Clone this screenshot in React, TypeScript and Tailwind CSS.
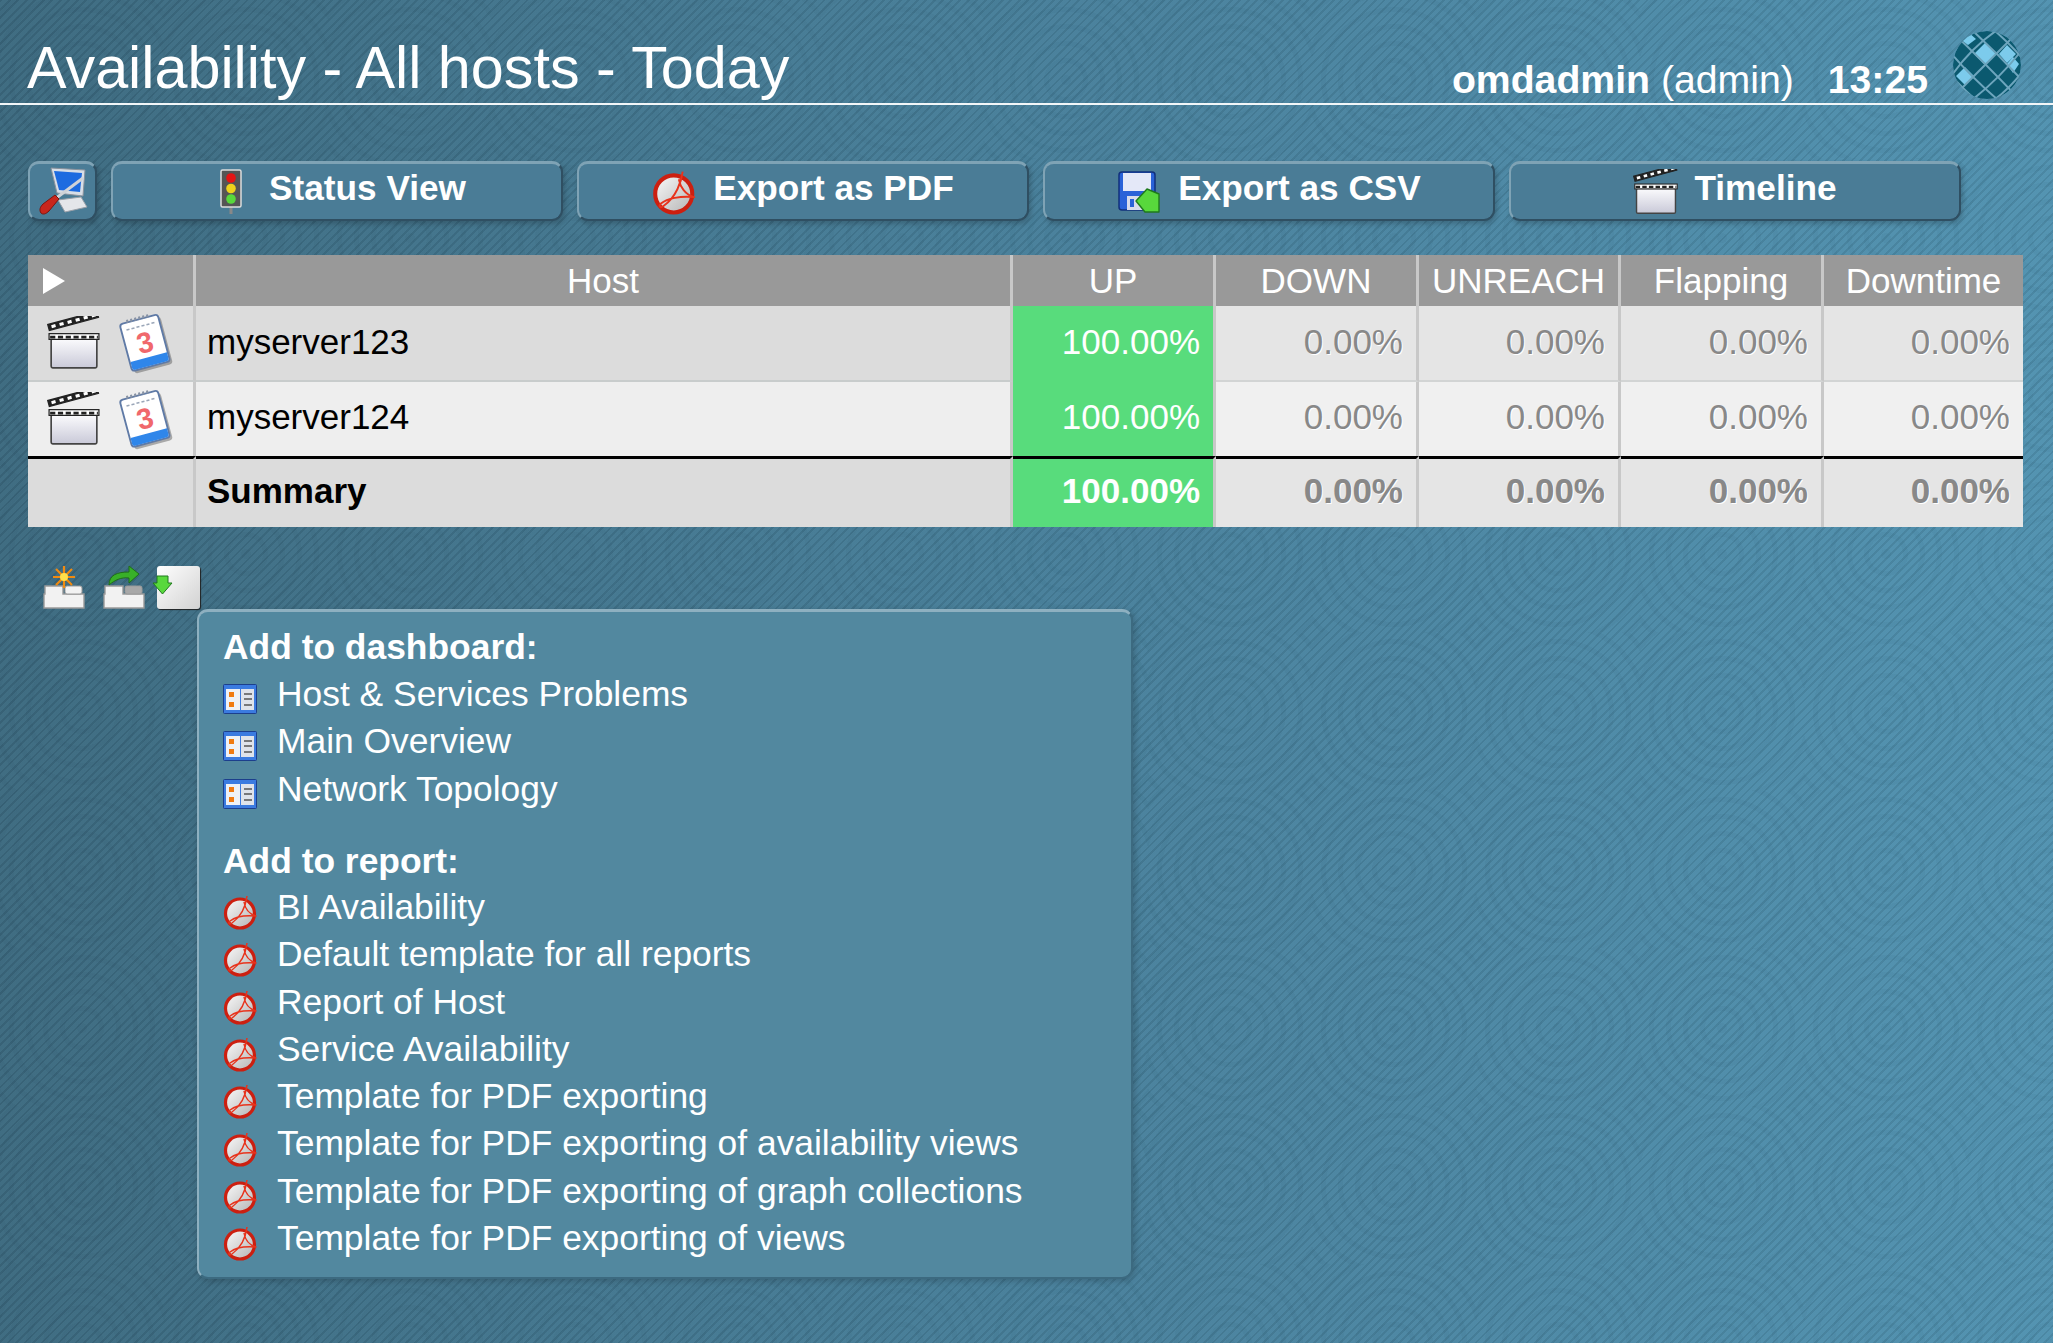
import type { ReactNode } from "react"

const dashboards = ["Host & Services Problems", "Main Overview", "Network Topology"]

const reports = [
  "BI Availability",
  "Default template for all reports",
  "Report of Host",
  "Service Availability",
  "Template for PDF exporting",
  "Template for PDF exporting of availability views",
  "Template for PDF exporting of graph collections",
  "Template for PDF exporting of views",
]

const hosts = ["myserver123", "myserver124"]
const columns = ["DOWN", "UNREACH", "Flapping", "Downtime"]
const widths = ["w-[168px]", "w-[817px]", "w-[203px]", "w-[203px]", "w-[202px]", "w-[203px]", "w-[199px]"]

function PdfIcon({ size = 36 }: { size?: number }) {
  return (
    <svg width={size} height={size} viewBox="0 0 36 36">
      <defs>
        <linearGradient id="pdfFace" x1="0" y1="0" x2="1" y2="1">
          <stop offset="0" stopColor="#fafafa" />
          <stop offset="1" stopColor="#b4b4b4" />
        </linearGradient>
      </defs>
      <circle cx="17" cy="19.5" r="14.5" fill="url(#pdfFace)" stroke="#cc1f10" strokeWidth="3.2" />
      <path
        d="M24 2c-1 8-5 20-15 27-3 2-4 0-2-2 5-4 15-6 26-5-7-2-11-8-12-14"
        fill="none"
        stroke="#e8331c"
        strokeWidth="1.5"
        strokeLinejoin="round"
      />
    </svg>
  )
}

function ClapperIcon({ size = 54 }: { size?: number }) {
  return (
    <svg width={size} height={size} viewBox="0 0 52 52">
      <defs>
        <linearGradient id="clapBody" x1="0" y1="0" x2="0" y2="1">
          <stop offset="0" stopColor="#fbfbfd" />
          <stop offset="1" stopColor="#c9c9d8" />
        </linearGradient>
      </defs>
      <rect x="4" y="22" width="44" height="28" rx="1.5" fill="url(#clapBody)" stroke="#444" strokeWidth="1.6" />
      <rect x="2" y="17" width="48" height="5.500" fill="#fff" stroke="#222" strokeWidth="1.200" />
      <path d="M3 20.300h46" stroke="#222" strokeWidth="2.500" strokeDasharray="5 2.500" />
      <g transform="rotate(-15 2 13)">
        <rect x="2" y="8" width="49" height="6" fill="#222" stroke="#222" strokeWidth="1.200" />
        <path d="M5 11h44" stroke="#fff" strokeWidth="3" strokeDasharray="4 4" />
      </g>
    </svg>
  )
}

function CalendarIcon() {
  return (
    <svg width="56" height="62" viewBox="0 0 54 60">
      <g transform="rotate(-15 27 30)">
        <rect x="9" y="9" width="38" height="47" rx="3" fill="#555" opacity="0.45" />
        <rect x="7" y="6" width="38" height="47" rx="3" fill="#fff" stroke="#5f7aa6" strokeWidth="1.8" />
        <path d="M7.800 44h36.400v6a2.300 2.300 0 0 1-2.300 2.300H10a2.300 2.300 0 0 1-2.300-2.300z" fill="#2f86ea" />
        <path d="M12 13h28" stroke="#9aa6b8" strokeWidth="1.500" strokeDasharray="3 2" />
        <path d="M14 5h24" stroke="#8792a4" strokeWidth="3" strokeDasharray="2 2" />
        <text x="26" y="39" textAnchor="middle" fontFamily="'Liberation Sans', sans-serif" fontWeight="700" fontSize="28" fill="#f0686c">
          3
        </text>
      </g>
    </svg>
  )
}

function DashletIcon() {
  return (
    <svg width="34" height="30" viewBox="0 0 34 30">
      <rect x="0.500" y="0.500" width="33" height="29" rx="1" fill="#3b7be0" stroke="#1c3f8c" />
      <rect x="3" y="5" width="14" height="21" fill="#eef1f6" />
      <rect x="18" y="5" width="13" height="21" fill="#dfe3ea" />
      <rect x="6" y="8" width="5" height="5" fill="#f07a10" />
      <rect x="6" y="18" width="5" height="5" fill="#f07a10" />
      <path d="M21 10h8M21 15h8M21 21h8" stroke="#555" strokeWidth="1.600" />
    </svg>
  )
}

function TrafficLightIcon() {
  return (
    <svg width="24" height="46" viewBox="0 0 24 46">
      <rect x="10.500" y="36" width="3" height="9" fill="#888" />
      <rect x="2" y="1" width="20" height="37" rx="1.500" fill="#555" stroke="#ddd" strokeWidth="1.500" />
      <circle cx="12" cy="9" r="4.800" fill="#e51414" />
      <circle cx="12" cy="19.500" r="4.800" fill="#eed21c" />
      <circle cx="12" cy="30" r="4.800" fill="#58d83c" />
    </svg>
  )
}

function FloppyIcon() {
  return (
    <svg width="44" height="44" viewBox="0 0 44 44">
      <rect x="1" y="2" width="36" height="38" rx="3" fill="#2a62d8" stroke="#12307c" strokeWidth="1.500" />
      <rect x="5" y="3" width="28" height="18" fill="#e4e8f8" />
      <rect x="9" y="26" width="20" height="14" fill="#d8dcec" />
      <rect x="12" y="29" width="4" height="8" fill="#2a62d8" />
      <path d="M29 19L18 31l9 11h14V24z" fill="#58d83c" stroke="#1f7a1c" strokeWidth="1.400" strokeLinejoin="round" />
    </svg>
  )
}

function ToolsIcon() {
  return (
    <svg width="52" height="52" viewBox="0 0 52 52">
      <path d="M14 2l34 2-2 26-26-3z" fill="#d8dee6" stroke="#8a929c" />
      <path d="M17 5l28 2-2 19-21-2z" fill="#1d6be0" />
      <path d="M21 34l23-3 6 10-22 5z" fill="#e4e6ea" stroke="#9aa0a8" />
      <path d="M46 12L18 33" stroke="#cfd3d8" strokeWidth="3" />
      <path d="M4 47c-2-3-1-6 2-9l12-9 4 4-10 12c-3 3-6 4-8 2z" fill="#c8261c" stroke="#7c140e" />
    </svg>
  )
}

function AddSnapinIcon({ tab, children }: { tab: string; children: ReactNode }) {
  return (
    <svg width="44" height="44" viewBox="0 0 44 44">
      <path d="M2 43V29h1v-8h18v8h21v14z" fill="#f2f2f2" stroke="#9a9a9a" strokeWidth="1.400" />
      <rect x="23" y="21" width="17" height="8" rx="2" fill={tab} stroke="#9a9a9a" />
      {children}
    </svg>
  )
}

function Ball() {
  return (
    <svg width="70" height="70" viewBox="0 0 70 70">
      <clipPath id="ballClip">
        <circle cx="35" cy="35" r="34" />
      </clipPath>
      <g clipPath="url(#ballClip)">
        <circle cx="35" cy="35" r="34" fill="#0b596f" />
        <path d="M33 13l11 11-11 11-11-11zM55 15l9 9-9 9-8-9zM13 37l9 9-9 9-9-9zM16 2l8 7-8 6-8-6zM61 27l6 7-6 9-6-9z" fill="#7ccbec" />
        <g fill="none" stroke="#6da5bd" strokeWidth="2">
          <path d="M-2 26Q8 8 26 -2M-2 48Q18 18 48 -2M0 68Q32 36 68 0M20 70Q48 48 70 20M42 70Q58 58 70 42" />
          <path d="M-2 44Q8 56 24 70M-2 22Q18 46 46 70M0 2Q30 30 68 70M20 0Q46 24 70 50M42 0Q60 16 70 28" />
        </g>
      </g>
    </svg>
  )
}

function ToolbarButton({ label, icon }: { label: string; icon: ReactNode }) {
  return (
    <button className="flex h-[60px] w-[452px] items-center justify-center gap-[15px] rounded-[11px] border-2 border-t-[3px] border-t-[#7fa3b5] border-l-[#7fa3b5] border-r-[#2f4f62] border-b-[#2f4f62] bg-[#4a7c96] text-[35.200px] font-bold text-white shadow-[2px_3px_5px_rgba(0,0,0,0.2)]">
      <span className="flex h-[46px] w-[46px] items-center justify-center">{icon}</span>
      <span className="pb-[6px]">{label}</span>
    </button>
  )
}

function PercentCell({ first, last }: { first?: boolean; last?: boolean }) {
  return (
    <td
      className={`pr-[13px] text-right text-[#888888] [text-shadow:1px_1px_0_#ffffff] ${first ? "border-b-2 border-b-[#d2d4d4] pb-[2px]" : "pb-[5px]"} ${
        last ? "" : "border-r-[3px] border-r-[#c8c8c8]"
      }`}
    >
      0.00%
    </td>
  )
}

function MenuRow({ icon, label }: { icon: ReactNode; label: string }) {
  return (
    <li className="flex h-[47.300px] items-center">
      <span className="flex w-[54px] shrink-0 items-center pt-[9px]">{icon}</span>
      <span>{label}</span>
    </li>
  )
}

export default function App() {
  return (
    <div className="min-h-[1343px] w-full overflow-hidden bg-[#4a83a0] bg-[linear-gradient(90deg,#3c6a80_0%,#477f9a_50%,#5192b0_100%)] font-['Liberation_Sans',sans-serif] text-white">
      <div className="min-h-[1343px] [background-image:repeating-linear-gradient(135deg,rgba(0,0,0,0.075)_0_2px,rgba(255,255,255,0.02)_2px_6px),repeating-radial-gradient(circle_at_82px_80px,rgba(0,30,50,0.035)_0_5px,transparent_5px_17px)] [background-size:auto,164px_158px]">
        <header className="flex h-[105px] items-end justify-between border-b-2 border-[#f2f6f8] pl-[27px] pr-[31px]">
          <h1 className="pb-[2px] text-[59.300px] leading-[66px]">Availability - All hosts - Today</h1>
          <div className="flex items-end">
            <div className="pb-[1px] text-[39.200px] leading-[44px]">
              <b>omdadmin</b> (admin)
              <b className="ml-[34px]">13:25</b>
            </div>
            <div className="mb-[3px] ml-[24px]">
              <Ball />
            </div>
          </div>
        </header>

        <div className="mt-[56px] flex gap-[14px] pl-[28px]">
          <button className="flex h-[60px] w-[69px] items-center justify-center rounded-[11px] border-2 border-t-[3px] border-t-[#7fa3b5] border-l-[#7fa3b5] border-r-[#2f4f62] border-b-[#2f4f62] bg-[#4a7c96] shadow-[2px_3px_5px_rgba(0,0,0,0.2)]">
            <ToolsIcon />
          </button>
          <ToolbarButton label="Status View" icon={<TrafficLightIcon />} />
          <ToolbarButton label="Export as PDF" icon={<PdfIcon size={46} />} />
          <ToolbarButton label="Export as CSV" icon={<FloppyIcon />} />
          <ToolbarButton label="Timeline" icon={<ClapperIcon size={46} />} />
        </div>

        <table className="ml-[28px] mt-[34px] w-[1995px] table-fixed border-separate border-spacing-0 text-[35px] leading-[40px]">
          <colgroup>
            {widths.map((w, i) => (
              <col key={i} className={w} />
            ))}
          </colgroup>
          <thead>
            <tr className="h-[51px] bg-[#999999] font-normal text-white">
              <th className="border-r-[3px] border-r-[#c8c8c8] pl-[14px] text-left">
                <svg width="24" height="28" viewBox="0 0 24 28">
                  <path d="M1 1l22 13L1 27z" fill="#fff" />
                </svg>
              </th>
              <th className="border-r-[3px] border-r-[#c8c8c8] font-normal">Host</th>
              <th className="border-r-[3px] border-r-[#c8c8c8] font-normal">UP</th>
              {columns.map((c, i) => (
                <th key={c} className={`font-normal ${i < 3 ? "border-r-[3px] border-r-[#c8c8c8]" : ""}`}>
                  {c}
                </th>
              ))}
            </tr>
          </thead>
          <tbody className="text-black">
            {hosts.map((host, i) => (
              <tr key={host} className={i === 0 ? "h-[76px] bg-[#e5e5e5]" : "h-[74px] bg-[#f0f0f0]"}>
                <td className={`border-r-[3px] border-r-[#c8c8c8] ${i === 0 ? "border-b-2 border-b-[#c8cccc] bg-[#dcdcdc]" : "bg-[#eeeeee]"}`}>
                  <div className="flex items-center gap-[17px] pl-[19px]">
                    <ClapperIcon />
                    <CalendarIcon />
                  </div>
                </td>
                <td className={`border-r-[3px] border-r-[#c8c8c8] pl-[11px] ${i === 0 ? "border-b-2 border-b-[#c8cccc] bg-[#dcdcdc] pb-[2px]" : "bg-[#eeeeee] pb-[5px]"}`}>{host}</td>
                <td className={`border-r-[3px] border-r-[#c8c8c8] bg-[#58dc7c] pr-[13px] text-right text-white ${i === 0 ? "pb-[4px]" : "pb-[5px]"}`}>100.00%</td>
                <PercentCell first={i === 0} />
                <PercentCell first={i === 0} />
                <PercentCell first={i === 0} />
                <PercentCell first={i === 0} last />
              </tr>
            ))}
            <tr className="h-[71px] bg-[#e5e5e5] font-bold">
              <td className="border-r-[3px] border-t-[3px] border-r-[#c8c8c8] border-t-black bg-[#dcdcdc]" />
              <td className="border-r-[3px] border-t-[3px] border-r-[#c8c8c8] border-t-black bg-[#dcdcdc] pb-[4px] pl-[11px]">Summary</td>
              <td className="border-r-[3px] border-t-[3px] border-r-[#c8c8c8] border-t-black bg-[#58dc7c] pb-[4px] pr-[13px] text-right text-white">100.00%</td>
              <td className="border-r-[3px] border-t-[3px] border-r-[#c8c8c8] border-t-black pb-[4px] pr-[13px] text-right text-[#888888] [text-shadow:1px_1px_0_#ffffff]">0.00%</td>
              <td className="border-r-[3px] border-t-[3px] border-r-[#c8c8c8] border-t-black pb-[4px] pr-[13px] text-right text-[#888888] [text-shadow:1px_1px_0_#ffffff]">0.00%</td>
              <td className="border-r-[3px] border-t-[3px] border-r-[#c8c8c8] border-t-black pb-[4px] pr-[13px] text-right text-[#888888] [text-shadow:1px_1px_0_#ffffff]">0.00%</td>
              <td className="border-t-[3px] border-t-black pb-[4px] pr-[13px] text-right text-[#888888] [text-shadow:1px_1px_0_#ffffff]">0.00%</td>
            </tr>
          </tbody>
        </table>

        <div className="ml-[42px] mt-[37px] flex h-[45px] items-end">
          <AddSnapinIcon tab="#f2f2f2">
            <path d="M22 1v22M11 12h22M14 4l16 16M30 4L14 20" stroke="#f08a10" strokeWidth="2.200" />
            <circle cx="22" cy="12" r="4" fill="#ffe04a" />
          </AddSnapinIcon>
          <div className="ml-[16px]">
            <AddSnapinIcon tab="#a8a8a8">
              <path d="M7 20c0-10 8-13 20-13V1l10 8-10 9v-5c-8-1-14 2-20 7z" fill="#38b028" stroke="#1f6f18" />
            </AddSnapinIcon>
          </div>
          <div className="relative ml-[11px] h-[43px] w-[43px] rounded-[3px] bg-[linear-gradient(135deg,#ffffff,#d2d2d2)] shadow-[1px_1px_1px_#222222]">
            <svg className="absolute left-[-5px] top-[9px]" width="21" height="20" viewBox="0 0 21 20">
              <path d="M5 1h11v7h4L10.500 19 1 8h4z" fill="#58d83c" stroke="#1f7a1c" />
            </svg>
          </div>
        </div>

        <div className="ml-[197px] h-[670px] w-[936px] rounded-[11px] border-2 border-t-[3px] border-t-[#8eb0c0] border-l-[#8eb0c0] border-r-[#3c6a80] border-b-[#3c6a80] bg-[#52889f] pl-[24px] pt-[16px] text-[35.400px] shadow-[2px_2px_6px_rgba(0,0,0,0.2)]">
          <div className="h-[43px] font-bold leading-[38px]">Add to dashboard:</div>
          <ul>
            {dashboards.map((d) => (
              <MenuRow key={d} label={d} icon={<DashletIcon />} />
            ))}
          </ul>
          <div className="mt-[29px] h-[42px] font-bold leading-[38px]">Add to report:</div>
          <ul>
            {reports.map((r) => (
              <MenuRow key={r} label={r} icon={<PdfIcon />} />
            ))}
          </ul>
        </div>
      </div>
    </div>
  )
}
